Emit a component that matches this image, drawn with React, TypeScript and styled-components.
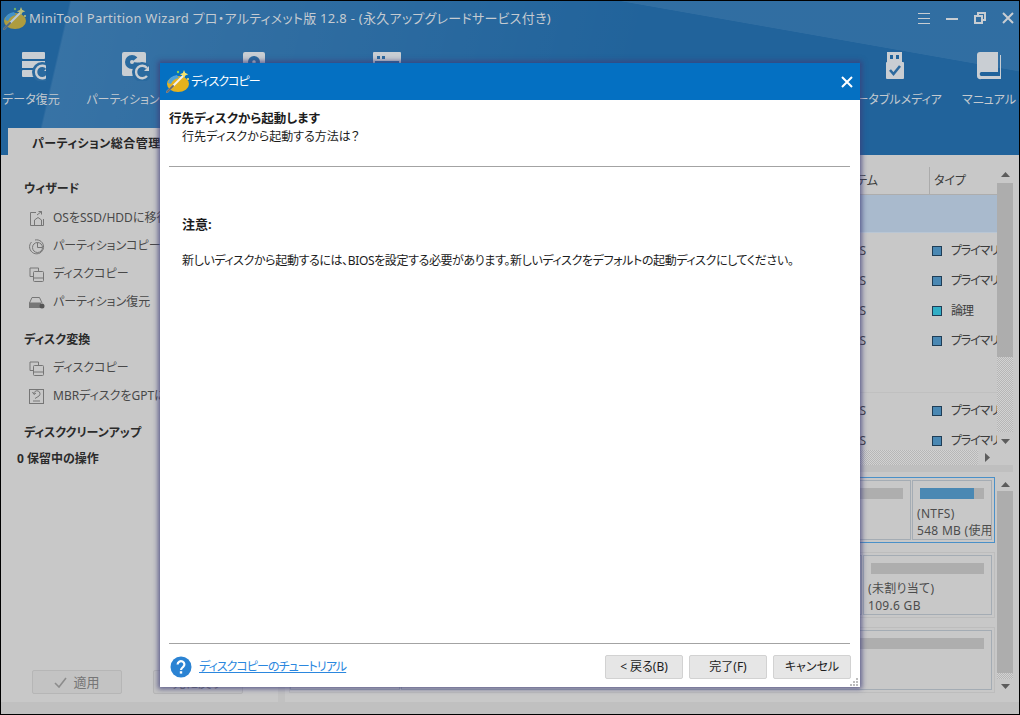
import React from 'react';
import styled, { createGlobalStyle } from 'styled-components';

const GlobalStyle = createGlobalStyle`
  html, body {
    margin: 0;
    padding: 0;
    overflow: hidden;
    background: #000;
  }
  * {
    box-sizing: border-box;
  }
`;

const Frame = styled.div`
  position: relative;
  width: 1020px;
  height: 715px;
  border: 1px solid #000;
  display: flex;
  flex-direction: column;
  overflow: hidden;
  background: #c8c8c8;
  color: #3c3c3c;
  font-family: 'Noto Sans', 'Noto Sans CJK JP', sans-serif;
  font-feature-settings: 'palt';
  font-size: 12px;
  line-height: 16px;
`;

/* ---- blue header ---- */

const Header = styled.header`
  flex: none;
  height: 154px;
  display: flex;
  flex-direction: column;
  background:
    linear-gradient(190deg, rgba(255, 255, 255, 0.07) 0 21%, rgba(255, 255, 255, 0) 21.2%),
    linear-gradient(103deg, rgba(0, 0, 0, 0) 0 6.5%, rgba(255, 255, 255, 0.1) 6.7%, rgba(255, 255, 255, 0) 62%),
    #21639b;
`;

const TitleBar = styled.div`
  flex: none;
  height: 34px;
  display: flex;
  align-items: center;
  padding-left: 1px;
  color: #c5cbd1;
  font-size: 13px;
  white-space: nowrap;
`;

const TitleText = styled.span`
  margin-left: 2px;
  letter-spacing: 0.27px;
`;

const WindowButtons = styled.div`
  margin-left: auto;
  display: flex;
  align-items: center;
  gap: 16px;
  padding-right: 5px;
  color: #c8cdd2;
`;

const Toolbar = styled.nav`
  flex: none;
  height: 93px;
  display: flex;
`;

const Tool = styled.div<{ $w: number }>`
  flex: none;
  width: ${({ $w }) => $w}px;
  display: flex;
  flex-direction: column;
  align-items: center;
  padding-top: 16px;
  color: #c3c9cf;
  white-space: nowrap;
`;

const ToolLabel = styled.span`
  margin-top: 11px;
`;

const ToolGap = styled.div`
  flex: 1;
`;

const TabStrip = styled.div`
  flex: none;
  height: 27px;
  padding-left: 7px;
`;

const Tab = styled.div`
  width: 180px;
  height: 27px;
  padding: 8px 0 0 24px;
  background: #c8c8c8;
  color: #262626;
  font-weight: 700;
  letter-spacing: 0.5px;
  white-space: nowrap;
`;

/* ---- work area ---- */

const Body = styled.div`
  flex: 1;
  min-height: 0;
  display: flex;
`;

const Sidebar = styled.aside`
  flex: none;
  width: 277px;
  display: flex;
  flex-direction: column;
  padding: 26px 0 8px;
`;

const SideHeading = styled.div<{ $gap: number }>`
  margin: ${({ $gap }) => $gap}px 0 0 23px;
  height: 16px;
  font-weight: 700;
  color: #2b2b2b;
`;

const PendingLine = styled.div`
  margin: 10px 0 0 16px;
  height: 16px;
  font-weight: 700;
  color: #2b2b2b;
`;

const SideItem = styled.div`
  height: 28px;
  display: flex;
  align-items: center;
  gap: 8px;
  padding-left: 27px;
  color: #484848;
  white-space: nowrap;
`;

const SideList = styled.div<{ $gap: number }>`
  margin-top: ${({ $gap }) => $gap}px;
`;

const SideButtons = styled.div`
  margin-top: auto;
  display: flex;
  gap: 31px;
  padding-left: 31px;
`;

const SideButton = styled.div`
  width: 90px;
  height: 24px;
  display: flex;
  align-items: center;
  justify-content: center;
  gap: 6px;
  border: 1px solid #b6b6b6;
  border-radius: 2px;
  background: #c3c3c3;
  color: #767676;
  font-size: 13px;
`;

const Splitter = styled.div`
  flex: none;
  width: 7px;
  background: #c1c1c1;
`;

const Main = styled.main`
  flex: 1;
  min-width: 0;
  display: flex;
  flex-direction: column;
  padding: 10px 6px 0 4px;
`;

const TableWrap = styled.section`
  flex: none;
  height: 285px;
  display: flex;
`;

const Table = styled.div`
  flex: 1;
  min-width: 0;
  overflow: hidden;
`;

const HeadRow = styled.div`
  height: 30px;
  display: flex;
  border-bottom: 1px solid #adadad;
`;

const HeadFs = styled.div`
  flex: 1;
  padding: 8px 51px 0 0;
  text-align: right;
`;

const HeadType = styled.div`
  flex: none;
  width: 68px;
  margin-top: 2px;
  padding: 6px 0 0 4px;
  border-left: 1px solid #ababab;
`;

const DiskRow = styled.div<{ $selected?: boolean }>`
  height: 38px;
  margin-bottom: 2px;
  background: ${({ $selected }) => ($selected ? '#a9bacd' : 'transparent')};
  border-bottom: 1px solid ${({ $selected }) => ($selected ? '#b9c6d4' : '#c0c0c0')};
`;

const PartRow = styled.div`
  height: 30px;
  padding-top: 2px;
  display: flex;
  align-items: center;
`;

const FsCell = styled.div`
  flex: 1;
  padding-right: 63px;
  text-align: right;
`;

const TypeCell = styled.div`
  flex: none;
  width: 68px;
  display: flex;
  align-items: center;
  gap: 9px;
  padding-left: 3px;
  letter-spacing: -1.1px;
  white-space: nowrap;
`;

const TypeSwatch = styled.span<{ $logical?: boolean }>`
  flex: none;
  width: 10px;
  height: 10px;
  border: 1px solid #1f3d56;
  background: ${({ $logical }) => ($logical ? '#31aec6' : '#4a88b3')};
`;

const ScrollV = styled.div`
  flex: none;
  width: 16px;
  display: flex;
  flex-direction: column;
  background: repeating-conic-gradient(#b6b6b6 0 25%, #d2d2d2 0 50%) 0 0 / 2px 2px;
`;

const ScrollArrow = styled.div<{ $h: number }>`
  flex: none;
  height: ${({ $h }) => $h}px;
  display: flex;
  align-items: center;
  justify-content: center;
  background: #c8c8c8;
  color: #5c5c5c;
`;

const ScrollThumb = styled.div<{ $h: number }>`
  flex: none;
  height: ${({ $h }) => $h}px;
  background: #adadad;
`;

const ScrollFill = styled.div`
  flex: 1;
`;

const ScrollH = styled.div`
  flex: none;
  height: 15px;
  display: flex;
  justify-content: flex-end;
  background: repeating-conic-gradient(#b6b6b6 0 25%, #d2d2d2 0 50%) 0 0 / 2px 2px;
`;

const ScrollHEnd = styled.div`
  width: 35px;
  padding-right: 16px;
  display: flex;
  align-items: center;
  justify-content: center;
  background: #c8c8c8;
  color: #5c5c5c;
`;

const ScrollRest = styled.div`
  flex: none;
  height: 7px;
  background: #bfbfbf;
`;

const MapWrap = styled.section`
  flex: none;
  margin-top: 5px;
  height: 216px;
  display: flex;
  gap: 2px;
`;

const MapRows = styled.div`
  flex: 1;
  min-width: 0;
  display: flex;
  flex-direction: column;
  gap: 9px;
`;

const MapRow = styled.div<{ $selected?: boolean }>`
  height: 66px;
  display: flex;
  gap: 1px;
  padding: 2px 2px 2px 0;
  border: 1px solid ${({ $selected }) => ($selected ? '#4a90c8' : '#bdbdbd')};
`;

const MapLabel = styled.div`
  flex: none;
  width: 110px;
  border: 1px solid #a4acb4;
`;

const Partition = styled.div<{ $w?: number }>`
  flex: ${({ $w }) => ($w ? `none` : 1)};
  width: ${({ $w }) => ($w ? `${$w}px` : 'auto')};
  min-width: 0;
  padding: 7px 7px 0;
  border: 1px solid #a4acb4;
  overflow: hidden;
  white-space: nowrap;
`;

const UsageBar = styled.div`
  height: 11px;
  background: #aeaeae;
`;

const UsageFill = styled.div`
  height: 100%;
  background: #4a88b3;
`;

const PartText = styled.div`
  margin: 7px 0 0 -3px;
  line-height: 16.5px;
  letter-spacing: 0.3px;
  color: #4c4c4c;
`;

const StatusBar = styled.footer`
  flex: none;
  height: 12px;
  background: #c0c0c0;
`;

/* ---- modal dialog over the page ---- */

const Dialog = styled.div`
  position: absolute;
  left: 159px;
  top: 62px;
  width: 700px;
  height: 624px;
  display: flex;
  flex-direction: column;
  background: #fff;
  box-shadow: 0 0 5px 2px rgba(60, 60, 120, 0.75);
  color: #1c1c1c;
`;

const DialogTitle = styled.div`
  flex: none;
  height: 37px;
  display: flex;
  align-items: center;
  padding: 0 7px 0 5px;
  background: #0470c2;
  color: #fff;
`;

const DialogTitleText = styled.span`
  margin-left: 1px;
  letter-spacing: -1px;
`;

const DialogClose = styled.span`
  margin-left: auto;
  display: flex;
`;

const DialogHead = styled.div`
  flex: none;
  margin: 0 10px 0 9px;
  height: 67px;
  padding-top: 10px;
  border-bottom: 1px solid #a3a3a3;
`;

const StepTitle = styled.div`
  font-weight: 700;
  font-size: 12.5px;
  line-height: 18px;
`;

const StepHint = styled.div`
  margin: 1px 0 0 13px;
`;

const DialogBody = styled.div`
  flex: 1;
  padding: 49px 22px 0;
`;

const NoteTitle = styled.div`
  font-weight: 700;
  font-size: 13px;
`;

const NoteText = styled.p`
  margin: 21px 0 0;
  letter-spacing: -0.38px;
  white-space: nowrap;
`;

const DialogFoot = styled.div`
  position: relative;
  flex: none;
  margin: 0 10px 0 9px;
  height: 44px;
  display: flex;
  align-items: center;
  padding: 3px 0 0 1px;
  border-top: 1px solid #a3a3a3;
`;

const TutorialLink = styled.a`
  margin-left: 7px;
  color: #2b87de;
  letter-spacing: -0.95px;
  text-decoration: underline;
`;

const DialogButtons = styled.div`
  margin-left: auto;
  margin-right: -1px;
  display: flex;
  gap: 6px;
`;

const DialogButton = styled.button`
  width: 78px;
  height: 24px;
  padding: 0;
  border: 1px solid #d2d2d2;
  border-radius: 2px;
  background: #e6e6e6;
  color: #1c1c1c;
  font: inherit;
  font-feature-settings: inherit;
`;

const ResizeGrip = styled.svg`
  position: absolute;
  right: -9px;
  bottom: 0;
`;

/* ---- drawings ---- */

const Logo: React.FC<{ $dim?: boolean }> = ({ $dim }) => (
  <svg width="25" height="25" viewBox="0 0 25 25" opacity={$dim ? 0.72 : 1}>
    <ellipse cx="13" cy="15" rx="11" ry="8" fill="#e5b21d" />
    <path d="M3 14 Q4 7 12 6 L14 9 Q8 10 6 15 Z" fill="#4fa3dc" />
    <path d="M2 23 L20 5" stroke="#f0f0f0" strokeWidth="2" strokeLinecap="round" />
    <path d="M2 23 L8 17" stroke="#6b6b6b" strokeWidth="2" strokeLinecap="round" />
    <path d="M19 1 l1.3 3 3 1.2 -3 1.2 -1.3 3 -1.2 -3 -3 -1.2 3 -1.2 Z" fill="#f5e26a" />
    <circle cx="13" cy="3" r="1.2" fill="#8ccf5a" />
    <circle cx="23" cy="10" r="1.1" fill="#f5e26a" />
  </svg>
);

const ICON = '#c9ced3';
const NOTCH = '#2a6a9f';

// circular refresh mark cut into the corner of the recovery icons
const RefreshMark: React.FC<{ cx: number; cy: number }> = ({ cx, cy }) => (
  <>
    <circle cx={cx} cy={cy} r="10" fill={NOTCH} />
    <path
      d={`M${cx + 5} ${cy - 4} A6.2 6.2 0 1 0 ${cx + 5} ${cy + 4}`}
      fill="none"
      stroke={ICON}
      strokeWidth="2.4"
    />
    <path d={`M${cx + 7} ${cy - 6} v5 h-5 Z`} fill={ICON} />
  </>
);

const DataRecoveryIcon = () => (
  <svg width="30" height="30" viewBox="-5 0 30 30">
    <rect x="1" y="1" width="23" height="7" rx="1" fill={ICON} />
    <rect x="1" y="10" width="23" height="7" fill={ICON} />
    <rect x="1" y="19" width="23" height="7" rx="1" fill={ICON} />
    <RefreshMark cx={21} cy={21} />
  </svg>
);

const PartitionRecoveryIcon = () => (
  <svg width="30" height="30" viewBox="0 0 30 30">
    <rect x="2" y="1" width="24" height="24" rx="2" fill={ICON} />
    <circle cx="12" cy="11" r="7" fill={NOTCH} />
    <circle cx="12" cy="11" r="2" fill={ICON} />
    <path d="M12 11 L19 5 L22 12 Z" fill={ICON} />
    <RefreshMark cx={22} cy={21} />
  </svg>
);

const BenchmarkIcon = () => (
  <svg width="30" height="30" viewBox="0 0 30 30">
    <rect x="4" y="1" width="22" height="26" rx="2" fill={ICON} />
    <circle cx="15" cy="11" r="6" fill={NOTCH} />
    <circle cx="15" cy="11" r="1.8" fill={ICON} />
  </svg>
);

const AnalyzerIcon = () => (
  <svg width="30" height="30" viewBox="0 0 30 30">
    <rect x="1" y="1" width="28" height="26" rx="1" fill={ICON} />
    <rect x="5" y="5" width="3" height="3" fill={NOTCH} />
    <rect x="10" y="5" width="3" height="3" fill={NOTCH} />
    <rect x="3" y="10" width="24" height="15" fill={NOTCH} />
  </svg>
);

const BootableIcon = () => (
  <svg width="30" height="30" viewBox="-2 0 30 30">
    <path d="M6 1 h15 v11 h-15 Z M9 4 v4 h3 v-4 Z M15 4 v4 h3 v-4 Z" fill={ICON} fillRule="evenodd" />
    <rect x="5" y="11" width="18" height="17" rx="1" fill={ICON} />
    <path d="M9 19 l3.5 4 L19 15" fill="none" stroke="#2c6a9f" strokeWidth="2.6" />
  </svg>
);

const ManualIcon = () => (
  <svg width="30" height="30" viewBox="0 0 30 30">
    <path
      d="M6 1 h18 v20 h-17 a2.2 2.2 0 0 0 0 4 h19 v-21 h1 v24 h-20 a3 3 0 0 1 -4 -3 v-21 a3 3 0 0 1 3 -3 Z"
      fill={ICON}
    />
    <path d="M3 4 h21 v17 h-17 a4 4 0 0 0 -4 4 Z" fill={ICON} />
  </svg>
);

const TOOLS = [
  { label: 'データ復元', w: 60, icon: <DataRecoveryIcon /> },
  { label: 'パーティション復元', w: 148, icon: <PartitionRecoveryIcon /> },
  { label: 'ディスクベンチマーク', w: 90, icon: <BenchmarkIcon /> },
  { label: 'スペースアナライザー', w: 176, icon: <AnalyzerIcon /> },
];

const SIDE_STROKE = '#767676';

const MigrateIcon = () => (
  <svg width="17" height="17" viewBox="0 0 17 17" fill="none" stroke={SIDE_STROKE}>
    <path d="M8 2.5 H2.5 V15.5 H15.5 V9" />
    <path d="M6.5 15 V10 L10 7.5 L13.5 10 V15 M9 5 L13.5 1.5 M10.5 1.5 H13.5 V4.5" />
  </svg>
);

const PartitionCopyIcon = () => (
  <svg width="17" height="17" viewBox="0 0 17 17" fill="none" stroke={SIDE_STROKE}>
    <path d="M3.5 4 A7 7 0 1 0 7 2" />
    <circle cx="9.5" cy="9.5" r="5" />
    <path d="M9.5 4.5 V9.5 H14.5" />
  </svg>
);

const DiskCopyIcon = () => (
  <svg width="17" height="17" viewBox="0 0 17 17" fill="none" stroke={SIDE_STROKE}>
    <path d="M5 10.5 H2 V2 H10.5 V5" />
    <rect x="5.5" y="5.5" width="10" height="10" rx="1" />
    <path d="M5.5 12 H15.5" />
  </svg>
);

const RestoreIcon = () => (
  <svg width="17" height="17" viewBox="0 0 17 17" fill="none" stroke={SIDE_STROKE}>
    <path d="M1.5 9 L4 3.5 H11.5 L14 9" />
    <rect x="1.5" y="9" width="11" height="4.5" fill="#767676" />
    <circle cx="14" cy="12" r="2.5" fill="#555" stroke="none" />
  </svg>
);

const ConvertIcon = () => (
  <svg width="17" height="17" viewBox="0 0 17 17" fill="none" stroke={SIDE_STROKE}>
    <rect x="1.5" y="1.5" width="14" height="14" />
    <path d="M5 13 H12 M6 6 A3 3 0 1 1 11 8 L7 10.5" />
    <path d="M4.5 4 L6 6.5 L8 5" />
  </svg>
);

const WizardItems = [
  { text: 'OSをSSD/HDDに移行', icon: <MigrateIcon /> },
  { text: 'パーティションコピー', icon: <PartitionCopyIcon /> },
  { text: 'ディスクコピー', icon: <DiskCopyIcon /> },
  { text: 'パーティション復元', icon: <RestoreIcon /> },
];

const ConvertItems = [
  { text: 'ディスクコピー', icon: <DiskCopyIcon /> },
  { text: 'MBRディスクをGPTに変換', icon: <ConvertIcon /> },
];

const FIRST_DISK = [
  { type: 'プライマリ' },
  { type: 'プライマリ' },
  { type: '論理', logical: true },
  { type: 'プライマリ' },
];

const SECOND_DISK = [{ type: 'プライマリ' }, { type: 'プライマリ' }];

const PartRows: React.FC<{ rows: { type: string; logical?: boolean }[] }> = ({ rows }) => (
  <>
    {rows.map((row, i) => (
      <PartRow key={i}>
        <FsCell>NTFS</FsCell>
        <TypeCell>
          <TypeSwatch $logical={row.logical} />
          {row.type}
        </TypeCell>
      </PartRow>
    ))}
  </>
);

const ArrowUp = () => (
  <svg width="9" height="5" viewBox="0 0 9 5">
    <path d="M0 5 L4.5 0 L9 5 Z" fill="currentColor" />
  </svg>
);

const ArrowDown = () => (
  <svg width="9" height="5" viewBox="0 0 9 5">
    <path d="M0 0 L4.5 5 L9 0 Z" fill="currentColor" />
  </svg>
);

const ArrowRight = () => (
  <svg width="5" height="9" viewBox="0 0 5 9">
    <path d="M0 0 L5 4.5 L0 9 Z" fill="currentColor" />
  </svg>
);

export default function App() {
  return (
    <Frame>
      <GlobalStyle />
      <Header>
        <TitleBar>
          <Logo $dim />
          <TitleText>MiniTool Partition Wizard プロ・アルティメット版 12.8 - (永久アップグレードサービス付き)</TitleText>
          <WindowButtons>
            <svg width="12" height="11" viewBox="0 0 12 11" stroke="currentColor">
              <path d="M0 0.5 H12 M0 5.5 H12 M0 10.5 H12" />
            </svg>
            <svg width="12" height="12" viewBox="0 0 12 12" stroke="currentColor" strokeWidth="2">
              <path d="M0 7 H12" />
            </svg>
            <svg width="12" height="12" viewBox="0 0 12 12" fill="none" stroke="currentColor" strokeWidth="2">
              <rect x="1" y="4" width="7" height="7" />
              <path d="M4 3 V1 H11 V8 H9" />
            </svg>
            <svg width="12" height="12" viewBox="0 0 12 12" stroke="currentColor" strokeWidth="2">
              <path d="M1 1 L11 11 M11 1 L1 11" />
            </svg>
          </WindowButtons>
        </TitleBar>
        <Toolbar>
          {TOOLS.map((tool) => (
            <Tool key={tool.label} $w={tool.w}>
              {tool.icon}
              <ToolLabel>{tool.label}</ToolLabel>
            </Tool>
          ))}
          <ToolGap />
          <Tool $w={130}>
            <BootableIcon />
            <ToolLabel>ブータブルメディア</ToolLabel>
          </Tool>
          <Tool $w={60}>
            <ManualIcon />
            <ToolLabel>マニュアル</ToolLabel>
          </Tool>
        </Toolbar>
        <TabStrip>
          <Tab>パーティション総合管理</Tab>
        </TabStrip>
      </Header>

      <Body>
        <Sidebar>
          <SideHeading $gap={0}>ウィザード</SideHeading>
          <SideList $gap={7}>
            {WizardItems.map((item) => (
              <SideItem key={item.text}>
                {item.icon}
                {item.text}
              </SideItem>
            ))}
          </SideList>
          <SideHeading $gap={16}>ディスク変換</SideHeading>
          <SideList $gap={6}>
            {ConvertItems.map((item) => (
              <SideItem key={item.text}>
                {item.icon}
                {item.text}
              </SideItem>
            ))}
          </SideList>
          <SideHeading $gap={15}>ディスククリーンアップ</SideHeading>
          <PendingLine>0 保留中の操作</PendingLine>
          <SideButtons>
            <SideButton>
              <svg width="13" height="11" viewBox="0 0 13 11" fill="none" stroke="#8c8c8c" strokeWidth="1.6">
                <path d="M1 6 L5 10 L12 1" />
              </svg>
              適用
            </SideButton>
            <SideButton>元に戻す</SideButton>
          </SideButtons>
        </Sidebar>
        <Splitter />
        <Main>
          <TableWrap>
            <Table>
              <HeadRow>
                <HeadFs>ファイルシステム</HeadFs>
                <HeadType>タイプ</HeadType>
              </HeadRow>
              <DiskRow $selected />
              <PartRows rows={FIRST_DISK} />
              <DiskRow />
              <PartRows rows={SECOND_DISK} />
            </Table>
            <ScrollV>
              <ScrollArrow $h={18}>
                <ArrowUp />
              </ScrollArrow>
              <ScrollThumb $h={174} />
              <ScrollFill />
              <ScrollArrow $h={18}>
                <ArrowDown />
              </ScrollArrow>
            </ScrollV>
          </TableWrap>
          <ScrollH>
            <ScrollHEnd>
              <ArrowRight />
            </ScrollHEnd>
          </ScrollH>
          <ScrollRest />
          <MapWrap>
            <MapRows>
              <MapRow $selected>
                <MapLabel />
                <Partition>
                  <UsageBar />
                </Partition>
                <Partition $w={80}>
                  <UsageBar>
                    <UsageFill style={{ width: `${(53 / 63) * 100}%` }} />
                  </UsageBar>
                  <PartText>
                    (NTFS)
                    <br />
                    548 MB (使用済み)
                  </PartText>
                </Partition>
              </MapRow>
              <MapRow>
                <MapLabel />
                <Partition>
                  <UsageBar />
                </Partition>
                <Partition $w={129}>
                  <UsageBar />
                  <PartText>
                    (未割り当て)
                    <br />
                    109.6 GB
                  </PartText>
                </Partition>
              </MapRow>
              <MapRow>
                <MapLabel />
                <Partition>
                  <UsageBar />
                </Partition>
              </MapRow>
            </MapRows>
            <ScrollV>
              <ScrollArrow $h={14}>
                <ArrowUp />
              </ScrollArrow>
              <ScrollThumb $h={182} />
              <ScrollFill />
              <ScrollArrow $h={14}>
                <ArrowDown />
              </ScrollArrow>
            </ScrollV>
          </MapWrap>
        </Main>
      </Body>
      <StatusBar />

      <Dialog>
        <DialogTitle>
          <Logo />
          <DialogTitleText>ディスクコピー</DialogTitleText>
          <DialogClose>
            <svg width="12" height="12" viewBox="0 0 12 12" stroke="#fff" strokeWidth="2">
              <path d="M1 1 L11 11 M11 1 L1 11" />
            </svg>
          </DialogClose>
        </DialogTitle>
        <DialogHead>
          <StepTitle>行先ディスクから起動します</StepTitle>
          <StepHint>行先ディスクから起動する方法は？</StepHint>
        </DialogHead>
        <DialogBody>
          <NoteTitle>注意:</NoteTitle>
          <NoteText>
            新しいディスクから起動するには、BIOSを設定する必要があります。新しいディスクをデフォルトの起動ディスクにしてください。
          </NoteText>
        </DialogBody>
        <DialogFoot>
          <svg width="22" height="22" viewBox="0 0 22 22">
            <circle cx="11" cy="11" r="10.5" fill="#2b83d3" />
            <path
              d="M7.6 8.4 a3.4 3.2 0 1 1 5.4 2.6 c-1.3 1 -2 1.6 -2 3"
              fill="none"
              stroke="#fff"
              strokeWidth="2.2"
            />
            <rect x="9.8" y="15.2" width="2.4" height="2.4" fill="#fff" />
          </svg>
          <TutorialLink>ディスクコピーのチュートリアル</TutorialLink>
          <DialogButtons>
            <DialogButton>&lt; 戻る(B)</DialogButton>
            <DialogButton>完了(F)</DialogButton>
            <DialogButton>キャンセル</DialogButton>
          </DialogButtons>
          <ResizeGrip width="9" height="9" viewBox="0 0 9 9" fill="#bdbdbd">
            <rect x="6" y="0" width="2" height="2" />
            <rect x="3" y="3" width="2" height="2" />
            <rect x="6" y="3" width="2" height="2" />
            <rect x="0" y="6" width="2" height="2" />
            <rect x="3" y="6" width="2" height="2" />
            <rect x="6" y="6" width="2" height="2" />
          </ResizeGrip>
        </DialogFoot>
      </Dialog>
    </Frame>
  );
}
